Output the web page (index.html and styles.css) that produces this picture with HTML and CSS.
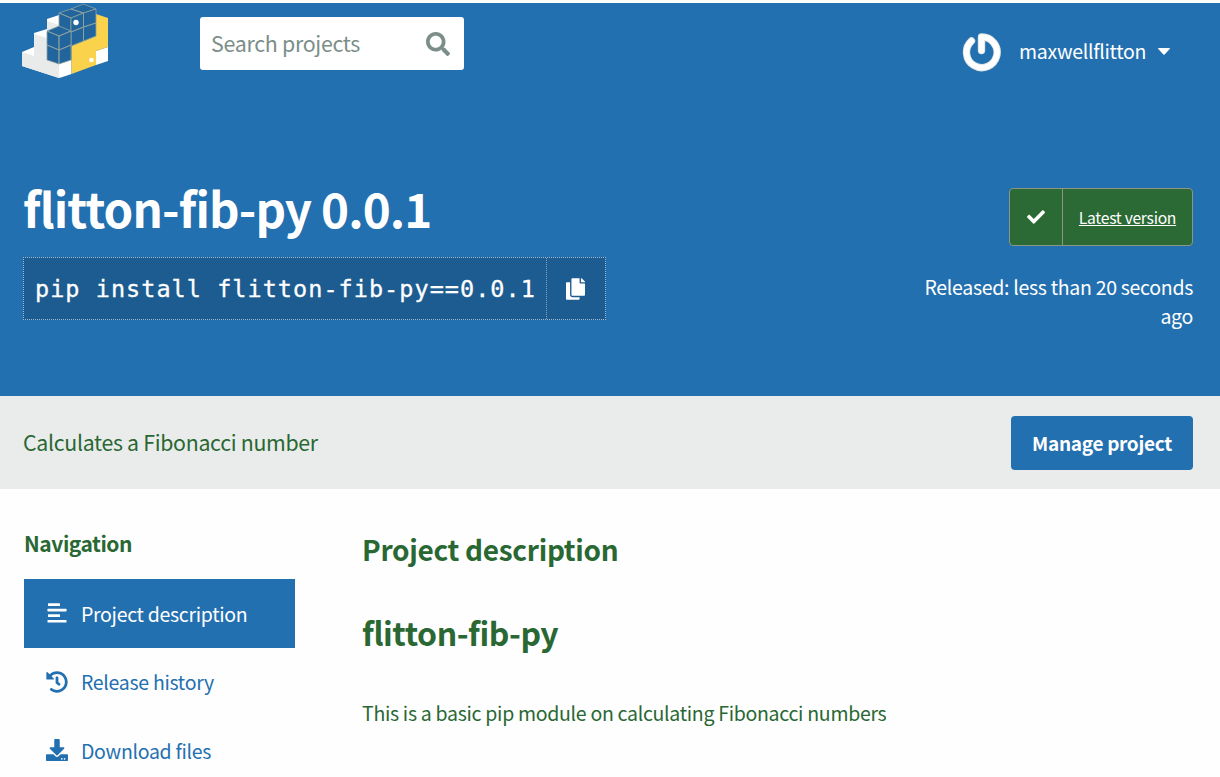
FILE: index.html
```html
<!DOCTYPE html>
<html lang="en">
<head>
<meta charset="utf-8">
<title>flitton-fib-py · PyPI</title>
<link rel="stylesheet" href="styles.css">
</head>
<body>
<header class="site-header">
  <a class="logo" href="#">
    <svg width="88" height="76" viewBox="21 3 88 76">
      <path fill="#fff" d="M22 52l12-5V33l13-4V19l24-8v54L59 78 22 66z"/>
      <path fill="#e9ebeb" d="M22 52l12 4V34l13 4V21l12 4v53L22 66z"/>
      <path fill="#fff" d="M59.500 64l12-4v14l-12 4zM96 51l12-4v14l-12 4z"/>
      <path fill="#fad24b" d="M71.500 46L96 36V14l12 4v29l-12 4v14l-24.500 9z"/>
      <circle cx="91.500" cy="60" r="2.300" fill="#fff"/>
      <g fill="#22659d" stroke="#8fa39f" stroke-width=".8" stroke-linejoin="round">
        <path d="M71 9l12.500-5L96 9l-12.500 4zM59 13l12-4 12.500 4L71 18zM59 13l12 5v14l-12-5z"/>
        <path d="M71 18l12.500-5v14L71 32zM83.500 13L96 9v14l-12.500 4zM71 32l12.500-5v14L71 46zM83.500 27L96 23v13l-12.500 5z"/>
        <path d="M47 31l12-5 12 5-12 5zM47 31l12 5v14l-12-5zM59 36l12-5v14l-12 5zM47 45l12 5v14l-12-4zM59 50l12-5v15l-12 4z"/>
      </g>
      <circle cx="76" cy="22.500" r="2.700" fill="#fff"/>
    </svg>
  </a>
  <form class="search">
    <span>Search projects</span>
    <svg width="24" height="24" viewBox="0 0 512 512"><path fill="currentColor" d="M505 442.700L405.300 343c-4.500-4.500-10.600-7-17-7H372c27.600-35.300 44-79.700 44-128C416 93.100 322.900 0 208 0S0 93.100 0 208s93.100 208 208 208c48.300 0 92.700-16.400 128-44v16.300c0 6.400 2.500 12.500 7 17l99.700 99.700c9.400 9.400 24.600 9.400 33.900 0l28.300-28.300c9.400-9.400 9.400-24.600.1-34zM208 336c-70.700 0-128-57.200-128-128 0-70.700 57.200-128 128-128 70.700 0 128 57.200 128 128 0 70.700-57.200 128-128 128z"/></svg>
  </form>
  <div class="user">
    <svg class="avatar" width="40" height="40" viewBox="0 0 40 40" fill="none" stroke-linecap="round">
      <path d="M10.500 9A15.300 15.300 0 1 0 20.500 5v13.500" stroke="#dfe3e3" stroke-width="7.400" stroke-linejoin="round"/>
      <path d="M10.500 9A15.300 15.300 0 1 0 20.500 5v13.500" stroke="#fff" stroke-width="5.500" stroke-linejoin="round"/>
    </svg>
    <span>maxwellflitton</span>
    <svg class="caret" width="12" height="7" viewBox="0 0 12 7"><path fill="#fff" d="M.5 0h11q.8.3.2 1L6.600 6.500q-.6.6-1.200 0L.3 1Q-.3.300.5 0z"/></svg>
  </div>
</header>
<section class="banner">
  <div class="package">
    <h1>flitton-fib-py 0.0.1</h1>
    <div class="pip">
      <code>pip install flitton-fib-py==0.0.1</code>
      <button class="copy"><svg width="19" height="22" viewBox="0 0 448 512"><path fill="#fff" d="M320 448v40c0 13.255-10.745 24-24 24H24c-13.255 0-24-10.745-24-24V120c0-13.255 10.745-24 24-24h72v296c0 30.879 25.121 56 56 56h168zm0-344V0H152c-13.255 0-24 10.745-24 24v368c0 13.255 10.745 24 24 24h272c13.255 0 24-10.745 24-24V128H344c-13.200 0-24-10.800-24-24zm120.971-31.029L375.029 7.029A24 24 0 0 0 358.059 0H352v96h96v-6.059a24 24 0 0 0-7.029-16.970z"/></svg></button>
    </div>
  </div>
  <div class="release">
    <a class="status" href="#">
      <span class="check"><svg width="18" height="18" viewBox="0 0 512 512"><path fill="#fff" d="M173.898 439.404l-166.400-166.400c-9.997-9.997-9.997-26.206 0-36.204l36.203-36.204c9.997-9.998 26.207-9.998 36.204 0L192 312.690 432.095 72.596c9.997-9.997 26.207-9.997 36.204 0l36.203 36.204c9.997 9.997 9.997 26.206 0 36.204l-294.400 294.401c-9.998 9.997-26.207 9.997-36.204-.001z"/></svg></span>
      <span class="label">Latest version</span>
    </a>
    <p>Released: less than 20 seconds<br>ago</p>
  </div>
</section>
<section class="summary">
  <p>Calculates a Fibonacci number</p>
  <a class="manage" href="#">Manage project</a>
</section>
<main>
  <nav>
    <h3>Navigation</h3>
    <a class="tab active" href="#"><svg width="20" height="20" viewBox="0 0 20 20" fill="#fff"><rect x="1" y=".3" width="12" height="2.600" rx=".5"/><rect y="5.800" x=".5" width="19" height="2.600" rx=".5"/><rect x="1" y="11.300" width="12" height="2.600" rx=".5"/><rect x=".5" y="16.900" width="19" height="2.600" rx=".5"/></svg><span>Project description</span></a>
    <a class="tab" href="#"><svg width="22" height="22" viewBox="0 0 512 512"><path fill="currentColor" d="M504 255.531c.253 136.640-111.180 248.372-247.820 248.468-59.015.042-113.223-20.530-155.822-54.911-11.077-8.940-11.905-25.541-1.839-35.607l11.267-11.267c8.609-8.609 22.353-9.551 31.891-1.984C173.062 425.135 212.781 440 256 440c101.705 0 184-82.311 184-184 0-101.705-82.311-184-184-184-48.814 0-93.149 18.969-126.068 49.932l50.754 50.754c10.080 10.080 2.941 27.314-11.313 27.314H24c-8.837 0-16-7.163-16-16V38.627c0-14.254 17.234-21.393 27.314-11.314l49.372 49.372C129.209 34.136 189.552 8 256 8c136.810 0 247.747 110.780 248 247.531zm-180.912 78.784l9.823-12.630c8.138-10.463 6.253-25.542-4.210-33.679L288 256.349V152c0-13.255-10.745-24-24-24h-16c-13.255 0-24 10.745-24 24v135.651l65.409 50.874c10.463 8.137 25.541 6.253 33.679-4.210z"/></svg><span>Release history</span></a>
    <a class="tab" href="#"><svg width="22" height="22" viewBox="0 0 512 512"><path fill="currentColor" d="M216 0h80c13.300 0 24 10.700 24 24v168h87.700c17.800 0 26.700 21.500 14.100 34.100L269.700 378.300c-7.500 7.500-19.800 7.500-27.300 0L90.100 226.100c-12.600-12.600-3.700-34.100 14.100-34.100H192V24c0-13.300 10.700-24 24-24zm296 376v112c0 13.300-10.700 24-24 24H24c-13.300 0-24-10.700-24-24V376c0-13.300 10.700-24 24-24h146.700l49 49c20.100 20.100 52.500 20.100 72.600 0l49-49H488c13.300 0 24 10.700 24 24zm-124 88c0-11-9-20-20-20s-20 9-20 20 9 20 20 20 20-9 20-20zm64 0c0-11-9-20-20-20s-20 9-20 20 9 20 20 20 20-9 20-20z"/></svg><span>Download files</span></a>
  </nav>
  <article>
    <h2>Project description</h2>
    <h1>flitton-fib-py</h1>
    <p>This is a basic pip module on calculating Fibonacci numbers</p>
  </article>
</main>
</body>
</html>
```

FILE: styles.css
```css
* { box-sizing: border-box; margin: 0; padding: 0; }
body {
  height: 777px;
  padding-top: 3px;
  overflow: hidden;
  background: #fefefe;
  color: #296733;
  font: 19.5px/29px "Noto Sans CJK SC", "Noto Sans", sans-serif;
  letter-spacing: -.3px;
  white-space: nowrap;
}
a { color: inherit; text-decoration: none; }
svg { display: block; flex: none; }

.site-header {
  display: flex;
  align-items: flex-start;
  height: 124px;
  padding-left: 21px;
  padding-right: 50px;
  background: #2370b0;
  color: #fff;
}
.search {
  display: flex;
  justify-content: space-between;
  align-items: center;
  width: 264px;
  height: 53px;
  margin: 14px 0 0 91px;
  padding: 0 14px 0 11px;
  border-radius: 3px;
  background: #fff;
  color: #7b8e89;
  font-size: 21.400px;
}
.search span { padding-bottom: 3px; }
.user {
  display: flex;
  align-items: center;
  height: 40px;
  margin: 29px 0 0 auto;
}
.user span { margin: 0 12px 0 18px; padding-bottom: 4px; }
.caret { margin-bottom: 2px; }

.banner {
  display: flex;
  justify-content: space-between;
  height: 269px;
  padding: 58px 27px 0 23px;
  background: #2370b0;
  color: #fff;
}
.banner h1 { height: 72px; font-size: 47.500px; line-height: 46px; font-weight: 700; letter-spacing: -.9px; }
.pip {
  display: flex;
  width: 583px;
  height: 63px;
  border: 1px dotted #9fbad0;
  background: #1d5c90;
}
.pip code {
  width: 522px;
  padding-left: 11px;
  font: 23.500px/63px "DejaVu Sans Mono", monospace;
  letter-spacing: 1.03px;
  -webkit-text-stroke: .3px #fff;
}
.copy {
  display: flex;
  flex: 1;
  align-items: center;
  justify-content: center;
  padding-right: 1px;
  border: 0;
  border-left: 1px dotted #7fa3c0;
  background: none;
}
.release { padding-top: 3px; text-align: right; }
.status {
  display: flex;
  width: 184px;
  height: 58px;
  margin: 0 0 26px auto;
  border: 1px solid #8b9684;
  border-radius: 4px;
  background: #2b6a34;
}
.check {
  display: flex;
  align-items: center;
  justify-content: center;
  width: 53px;
  border-right: 1px solid #8b9684;
}
.label {
  flex: 1;
  text-align: center;
  font-size: 15.7px;
  line-height: 58px;
  text-decoration: underline;
}

.summary {
  display: flex;
  align-items: center;
  justify-content: space-between;
  height: 93px;
  padding: 0 27px 0 23px;
  background: #eaeceb;
  font-size: 21.300px;
}
.summary p { padding-bottom: 2px; }
.manage {
  width: 182px;
  height: 54px;
  border-radius: 4px;
  background: #2370b0;
  color: #fff;
  font-size: 19px;
  font-weight: 700;
  line-height: 54px;
  text-align: center;
}

main { display: flex; gap: 67px; padding: 0 24px; }
nav { width: 271px; padding-top: 40px; }
nav h3 { height: 50px; font-size: 21px; font-weight: 700; letter-spacing: -.45px; }
.tab { display: flex; align-items: center; height: 68.500px; padding-left: 22px; color: #2370b0; }
.tab svg { width: 22px; }
.tab span { margin-left: 13px; }
.active { background: #2370b0; color: #fff; }
article { padding-top: 43px; }
article h2 { font-size: 28px; line-height: 34px; }
article h1 { margin-top: 46px; font-size: 32px; line-height: 40px; letter-spacing: -.45px; }
article p { margin-top: 46px; }
```
